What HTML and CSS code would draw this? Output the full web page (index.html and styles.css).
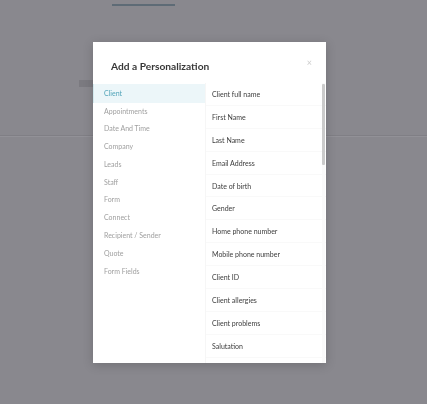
FILE: index.html
```html
<!DOCTYPE html>
<html lang="en">
<head>
<meta charset="utf-8">
<title>Add a Personalization</title>
<link rel="stylesheet" href="styles.css">
</head>
<body>
<div class="backdrop">
  <div class="tab-line"></div>
  <div class="chip-row"><span class="chip"></span></div>
  <div class="divider"></div>
</div>

<div class="modal">
  <div class="modal-header">
    <h2 class="modal-title">Add a Personalization</h2>
    <span class="close">&times;</span>
  </div>
  <div class="modal-body">
    <ul class="categories">
      <li class="cat active">Client</li>
      <li class="cat">Appointments</li>
      <li class="cat">Date And Time</li>
      <li class="cat">Company</li>
      <li class="cat">Leads</li>
      <li class="cat">Staff</li>
      <li class="cat">Form</li>
      <li class="cat">Connect</li>
      <li class="cat">Recipient / Sender</li>
      <li class="cat">Quote</li>
      <li class="cat">Form Fields</li>
    </ul>
    <div class="fields-pane">
      <ul class="fields">
        <li class="field">Client full name</li>
        <li class="field">First Name</li>
        <li class="field">Last Name</li>
        <li class="field">Email Address</li>
        <li class="field">Date of birth</li>
        <li class="field">Gender</li>
        <li class="field">Home phone number</li>
        <li class="field">Mobile phone number</li>
        <li class="field">Client ID</li>
        <li class="field">Client allergies</li>
        <li class="field">Client problems</li>
        <li class="field">Salutation</li>
      </ul>
      <div class="scroll-track"><div class="scroll-thumb"></div></div>
    </div>
  </div>
</div>
</body>
</html>
```
FILE: styles.css
```css
* { box-sizing: border-box; }

html, body {
  margin: 0;
  padding: 0;
}

body {
  width: 427px;
  height: 404px;
  overflow: hidden;
  background: #89888e;
  font-family: Lato, "Liberation Sans", sans-serif;
}

.backdrop {
  padding-top: 4px;
}

.tab-line {
  margin-left: 112px;
  width: 63px;
  height: 2px;
  background: #5e6b76;
}

.chip-row {
  padding: 74px 0 0 79px;
  height: 128px;
}

.chip {
  display: block;
  width: 14px;
  height: 7px;
  background: #7b7a80;
}

.divider {
  height: 2px;
  margin-top: 1px;
  background: #807f85;
  border-bottom: 1px solid #929197;
}

.modal {
  position: fixed;
  left: 93px;
  top: 42px;
  width: 233px;
  height: 321px;
  background: #fff;
  box-shadow: 0 2px 10px rgba(0, 0, 0, 0.18);
  display: flex;
  flex-direction: column;
}

.modal-header {
  height: 41px;
  flex: none;
  display: flex;
  justify-content: space-between;
  align-items: flex-start;
  padding: 17px 14px 0 18px;
}

.modal-title {
  margin: 0;
  font-size: 10.2px;
  line-height: 14px;
  font-weight: 700;
  color: #383838;
}

.close {
  font-size: 9px;
  line-height: 9px;
  color: #cdcdcd;
  margin-top: -1px;
}

.modal-body {
  flex: 1;
  min-height: 0;
  display: grid;
  grid-template-columns: 112px 121px;
}

.categories,
.fields {
  list-style: none;
  margin: 0;
  padding: 0;
}

.categories {
  padding-top: 1px;
}

.cat {
  height: 17.8px;
  line-height: 17.8px;
  padding-left: 11px;
  font-size: 7px;
  color: #a0a0a0;
}

.cat.active {
  background: #ecf6f9;
  color: #52a4b9;
  border-left: 1px solid #d3e9ee;
  padding-left: 10px;
  height: 18.5px;
  line-height: 18.5px;
}

.fields-pane {
  position: relative;
  height: 280px;
  overflow: hidden;
  border-left: 1px solid #f6f6f6;
}

.field {
  height: 22.9px;
  line-height: 22px;
  padding-left: 6px;
  font-size: 7px;
  color: #3c3c3c;
  border-bottom: 1px solid #f9f9f9;
}

.scroll-track {
  position: absolute;
  top: 0;
  right: 1px;
  bottom: 0;
  width: 3px;
  background: #fafafa;
}

.scroll-thumb {
  margin-top: 1px;
  height: 81px;
  background: #cbcbcb;
  border-radius: 1px;
}
```
